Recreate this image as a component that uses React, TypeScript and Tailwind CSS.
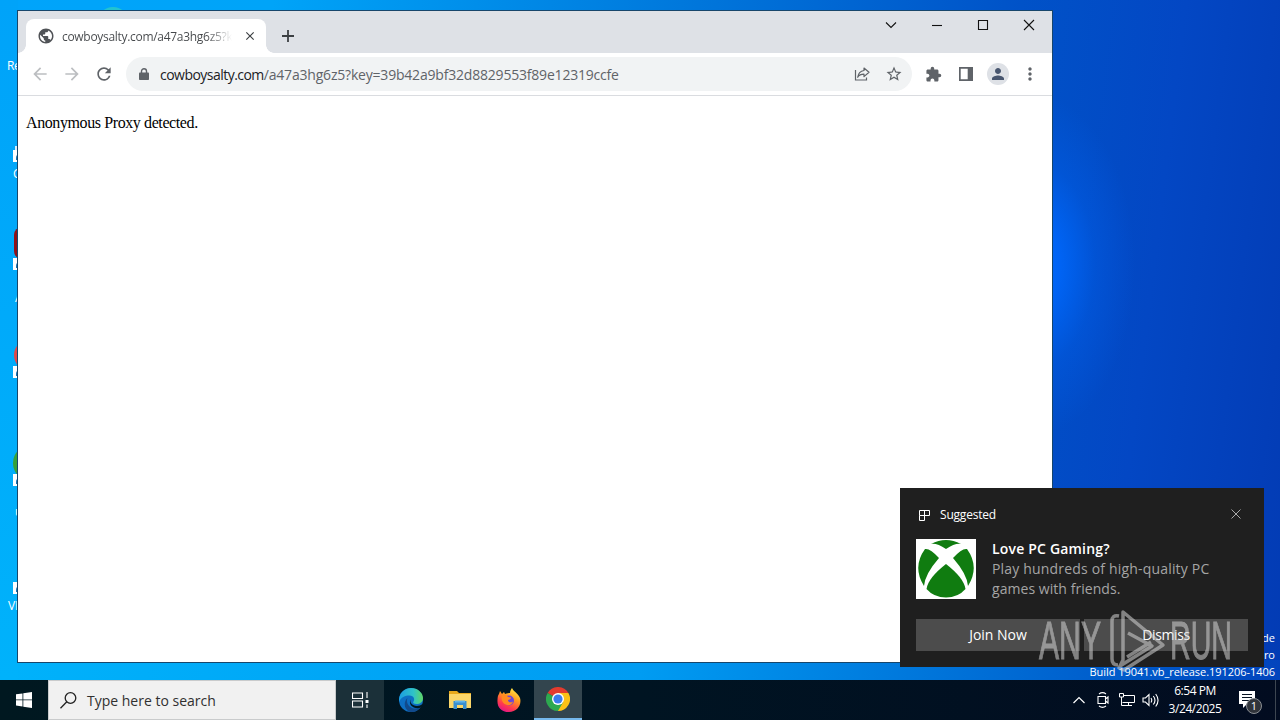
import type { ReactNode } from "react";
import { MdArrowBack, MdArrowForward, MdClose, MdExtension, MdMoreVert, MdPerson, MdPublic, MdRefresh, MdStarBorder } from "react-icons/md";

const shortcuts = [
  { id: "bin", top: "top-[150px]", art: null },
  { id: "pdf", top: "top-[258px]", art: "absolute top-[227px] left-[14px] h-8 w-8 rounded-lg bg-[#8f1118]" },
  { id: "red", top: "top-[366px]", art: "absolute top-[339px] left-[14px] h-8 w-8 rounded-full bg-[#e04848]" },
  { id: "green", top: "top-[474px]", art: "absolute top-[445px] left-[13px] h-9 w-9 rounded-full bg-[#35a13a]" },
  { id: "vlc", top: "top-[582px]", art: null },
];

const DesktopIcons = () => (
  <div className="absolute inset-0 text-xs text-white">
    <div className="absolute top-[7px] left-[97px] h-8 w-8 rounded-full bg-[#22c3d0]" />
    <div className="absolute top-[146px] left-[15px] h-2 w-3 bg-[#d9eefb]" />
    {shortcuts.map(({ id, top, art }) => (
      <div key={id}>
        {art && <div className={art} />}
        <div className={`absolute left-[13px] h-3 w-3 bg-white ${top}`}>
          <div className="absolute top-1 left-[3px] h-1.5 w-2 rounded-tl bg-[#1474b8]" />
        </div>
      </div>
    ))}
    <span className="absolute top-[58px] left-[7px] tracking-[-0.3px]">Re</span>
    <span className="absolute top-[166px] left-[13px]">C</span>
    <span className="absolute top-[290px] left-[15px]">A</span>
    <span className="absolute top-[504px] left-[15px]">u</span>
    <span className="absolute top-[598px] left-[8px] tracking-[-0.2px]">VL</span>
  </div>
);

const Caption = ({ children }: { children: ReactNode }) => (
  <div className="flex h-7 w-[46px] items-center justify-center">
    <svg width="12" height="12" viewBox="0 0 12 12" fill="none" stroke="#111" strokeWidth="1.1">
      {children}
    </svg>
  </div>
);

const TabStrip = () => (
  <div className="flex h-[42px] bg-[#dee1e6]">
    <div className="relative mt-2 ml-2 flex h-[34px] w-60 items-center rounded-t-lg bg-white pl-[11px]">
      <div className="absolute bottom-0 -left-2 h-2 w-2 bg-[radial-gradient(circle_at_0_0,transparent_7.5px,white_8px)]" />
      <div className="absolute -right-2 bottom-0 h-2 w-2 bg-[radial-gradient(circle_at_100%_0,transparent_7.5px,white_8px)]" />
      <MdPublic className="size-[18px] text-[#505357]" />
      <span className="mt-px ml-[7px] w-[170px] overflow-hidden bg-gradient-to-r from-[#45484b] from-85% to-transparent bg-clip-text text-xs tracking-[-0.3px] whitespace-nowrap text-transparent">
        cowboysalty.com/a47a3hg6z5?k
      </span>
      <MdClose className="ml-[11px] size-3.5 text-[#3c4043]" />
    </div>
    <svg className="mt-[19px] ml-4" width="12" height="12" viewBox="0 0 12 12" stroke="#3c4043" strokeWidth="1.8">
      <path d="M6 0v12M0 6h12" />
    </svg>
    <div className="ml-auto flex">
      <Caption><path d="M1 3.5l5 5 5-5" /></Caption>
      <Caption><path d="M1 6.5h10" /></Caption>
      <Caption><path d="M1.5 1.5h9v9h-9z" /></Caption>
      <Caption><path d="M1 1l10 10M11 1L1 11" /></Caption>
    </div>
  </div>
);

const Toolbar = () => (
  <div className="flex h-[43px] items-center border-b border-[#dadce0] bg-white pl-3 text-[#5f6368]">
    <MdArrowBack className="size-5 text-[#bcbec1]" />
    <MdArrowForward className="ml-3 size-5 text-[#bcbec1]" />
    <MdRefresh className="ml-3 size-5" />
    <div className="ml-3 flex h-[34px] w-[786px] items-center rounded-full bg-[#f1f3f4] pl-[13px]">
      <svg width="10" height="13" viewBox="0 0 10 13" fill="none">
        <path d="M2.500 5V3.300a2.500 2.500 0 0 1 5 0V5" stroke="currentColor" strokeWidth="1.400" />
        <path d="M.8 4.500h8.400q.8 0 .8.800v6q0 .8-.8.800H.8q-.8 0-.8-.8v-6q0-.8.8-.8z" fill="currentColor" />
      </svg>
      <span className="mt-px ml-[11px] text-sm whitespace-nowrap">
        <span className="tracking-[-0.53px] text-[#202124]">cowboysalty.com</span>
        <span className="tracking-[-0.2px]">/a47a3hg6z5?key=39b42a9bf32d8829553f89e12319ccfe</span>
      </span>
      <svg className="mr-[15px] ml-auto" width="16" height="16" viewBox="0 0 16 16" fill="none" stroke="currentColor" strokeWidth="1.2">
        <path d="M1.500 4v10h11v-2.500" />
        <path d="M10 2l5 4.300-5 4.300V8.200C7 8.200 5 9 3.700 11.300 4.200 7.500 6.300 5 10 4.500z" strokeLinejoin="round" />
      </svg>
      <MdStarBorder className="mr-[9px] size-[18px]" />
    </div>
    <MdExtension className="ml-[13px] size-[17px]" />
    <svg className="ml-4" width="16" height="16" viewBox="0 0 16 16" fill="currentColor">
      <path d="M1 1h14v14H1zM2.700 2.700v10.600h7V2.700z" fillRule="evenodd" />
    </svg>
    <div className="ml-[13px] flex size-[22px] items-center justify-center rounded-full bg-[#dee1e6]">
      <MdPerson className="size-[18px] text-[#48566f]" />
    </div>
    <MdMoreVert className="ml-[11px] size-5" />
  </div>
);

const BrowserWindow = () => (
  <div className="absolute top-[10px] left-[17px] h-[653px] w-[1036px] border border-[#17466b] bg-white">
    <TabStrip />
    <Toolbar />
    <p className="mt-[18px] ml-2 font-['Liberation_Serif',serif] text-base leading-[18px] tracking-[-0.4px] text-black">
      Anonymous Proxy detected.
    </p>
  </div>
);

const XboxLogo = () => (
  <svg width="60" height="60" viewBox="0 0 60 60">
    <path d="M0 0h60v60H0z" fill="#fff" />
    <g fill="#107c10">
      <path d="M15 5Q30-3 45 5 39 4 30 10 21 4 15 5z" />
      <path d="M9 10Q14 9 23 19 9 35 8 47-4 28 9 10z" />
      <path d="M51 10Q46 9 37 19 51 35 52 47 64 28 51 10z" />
      <path d="M30 25Q48 39 49.500 50 42 58.500 30 58.500T10.500 50Q12 39 30 25z" />
    </g>
  </svg>
);

const Watermark = () => (
  <svg className="absolute top-[608px] left-[1036px]" width="200" height="66" viewBox="0 0 200 66" opacity="0.55">
    <g fill="#d4d4d4" stroke="#d4d4d4" strokeWidth="1" fontFamily="'Liberation Sans Narrow', 'Liberation Sans', sans-serif" fontSize="54">
      <text x="3" y="51" textLength="62" lengthAdjust="spacingAndGlyphs">ANY</text>
      <text x="134" y="51" textLength="62" lengthAdjust="spacingAndGlyphs">RUN</text>
    </g>
    <g fill="none" stroke="#d4d4d4" strokeWidth="3.500" strokeLinejoin="round">
      <path d="M83 8c-5-1-7 1-7 5v38c0 4 2 6 6 6" />
      <path d="M87 4l40 33-39 25-5-2 4-8z" />
      <path d="M92 25l24 13-32 20M91 49l24-15" />
    </g>
  </svg>
);

const Toast = () => (
  <div className="absolute top-[488px] left-[900px] flex h-[179px] w-[364px] flex-col bg-[#1f1f1f] px-4 pt-[19px] text-white">
    <div className="flex h-4 items-center text-xs">
      <svg className="ml-[3px]" width="12" height="12" viewBox="0 0 12 12" fill="none" stroke="white">
        <path d="M.5 1.500h10v5H.5zM.5 6.500v5h5v-10" />
      </svg>
      <span className="ml-[9px] tracking-[-0.2px]">Suggested</span>
      <svg className="mr-[7px] mb-0.5 ml-auto" width="10" height="10" viewBox="0 0 10 10" stroke="#aaa">
        <path d="M.5.5l9 9M9.500.5l-9 9" />
      </svg>
    </div>
    <div className="mt-4 flex gap-4">
      <XboxLogo />
      <div className="text-sm leading-5 whitespace-nowrap">
        <div className="font-semibold tracking-[0.18px]">Love PC Gaming?</div>
        <div className="tracking-[0.18px] text-[#a5a5a5]">Play hundreds of high-quality PC</div>
        <div className="tracking-[0.05px] text-[#a5a5a5]">games with friends.</div>
      </div>
    </div>
    <div className="mt-5 grid grid-cols-2 gap-1 text-sm">
      <div className="flex h-8 items-center justify-center bg-[#4c4c4c]">Join Now</div>
      <div className="flex h-8 items-center justify-center bg-[#4c4c4c] tracking-[-0.4px]">Dismiss</div>
    </div>
  </div>
);

const EdgeIcon = () => (
  <svg width="24" height="24" viewBox="0 0 24 24">
    <defs>
      <linearGradient id="edgeTop" x1="0" x2="1">
        <stop offset="0" stopColor="#1b9de2" />
        <stop offset="0.6" stopColor="#2fc2c8" />
        <stop offset="1" stopColor="#5fd665" />
      </linearGradient>
    </defs>
    <circle cx="12" cy="12" r="12" fill="#0d6fc4" />
    <path d="M0 11C1 4 6 0 12 0c7 0 12 5 12 10 0 4-3 6-6.500 6-3 0-4-1.500-3-2.500 1.500-2 .5-6-4-6C6 7.500 2 9 0 14z" fill="url(#edgeTop)" />
    <path d="M8.500 10c-2 5 2 10.500 8 10.500 2 0 4-.5 5.500-1.500C19 23 15 24.500 11 24 5 22 4 14 8.500 10z" fill="#114a8c" />
    <path d="M12 10.500c-2 3.500 1 7.500 6 7.500 2 0 4-1 5.500-2l.5 1-2 2.500c-6 2.500-14-2-10-9z" fill="#001820" />
  </svg>
);

const ExplorerIcon = () => (
  <svg width="22" height="18" viewBox="0 0 22 18">
    <path d="M0 0h8l2 2h12v4H0z" fill="#e8a91c" />
    <path d="M0 3h22v14H0z" fill="#fbd669" />
    <path d="M4.500 10h13v8h-3.500v-4H8v4H4.500z" fill="#3a8fd0" />
    <path d="M6 9.500h10v2H6z" fill="#62b4ea" />
  </svg>
);

const FirefoxIcon = () => (
  <svg width="24" height="24" viewBox="0 0 24 24">
    <defs>
      <linearGradient id="fox" x1="0.8" y1="0" x2="0.3" y2="1">
        <stop offset="0" stopColor="#fff04a" />
        <stop offset="0.4" stopColor="#ff9a20" />
        <stop offset="0.75" stopColor="#ff3a4e" />
        <stop offset="1" stopColor="#e31587" />
      </linearGradient>
    </defs>
    <path d="M2 6l1-3 2 3 2-2 1 2c2-1 4-1 5-1 0-2 1-4 2-5 1 3 6 5 8 10 2 7-3 14-11 14S0 19 .5 12C.6 9 1 7 2 6z" fill="url(#fox)" />
    <circle cx="12" cy="12.500" r="5" fill="#6a45d8" />
    <path d="M5 7c2-1 5 0 6 2l3 .5c0 2-3 2-3 3s2 3 5 1c-1 5-9 5-11-1-.5-2-.5-4 0-5.500z" fill="#ff8a20" />
  </svg>
);

const ChromeIcon = () => (
  <svg width="24" height="24" viewBox="0 0 24 24">
    <path d="M12 12L1.600 6A12 12 0 0 1 22.400 6z" fill="#e33b2e" />
    <path d="M12 12L22.400 6A12 12 0 0 1 12 24z" fill="#fbc116" />
    <path d="M12 12l5.200 3L12 24A12 12 0 0 1 1.600 6z" fill="#2da94f" />
    <path d="M12 6h10.400l-5.200 9L12 12z" fill="#fbc116" />
    <circle cx="12" cy="12" r="6" fill="#fff" />
    <circle cx="12" cy="12" r="4.600" fill="#3b7ded" />
  </svg>
);

const Tray = () => (
  <div className="ml-auto flex h-full items-center text-white">
    <svg width="12" height="8" viewBox="0 0 12 8" fill="none" stroke="white" strokeWidth="1.2">
      <path d="M.5 7L6 1.500 11.500 7" />
    </svg>
    <svg className="ml-3" width="12" height="16" viewBox="0 0 12 16" fill="none" stroke="white" strokeWidth="1.1">
      <path d="M1 4.500h7.500v7H1zM8.500 7l2.500-2v6L8.500 9M2 2c2-1.500 5-1.500 7 0M2 14c2 1.500 5 1.500 7 0" />
    </svg>
    <svg className="ml-[9px]" width="18" height="14" viewBox="0 0 18 14" fill="none" stroke="white">
      <path d="M5.500 2.500h11v7h-12M10.500 9.500v3M7 12.500h7M1.500.5h4v3.500h-4zM3.500 4v8.500H7" />
    </svg>
    <svg className="ml-[6px]" width="18" height="14" viewBox="0 0 18 14" fill="none" stroke="white" strokeWidth="1.100">
      <path d="M1 5h2.500L7 1.500v11L3.500 9H1zM9 5c1 1.500 1 3 0 4.500M11.300 3c2 2.500 2 6 0 8.500M13.700 1c3 4 3 8.500 0 12.500" />
    </svg>
    <div className="ml-[7px] w-[56px] text-center text-xs leading-[18px] tracking-[-0.45px] whitespace-nowrap">
      <div>6:54 PM</div>
      <div>3/24/2025</div>
    </div>
    <div className="relative ml-4 h-10 w-[36px]">
      <svg className="absolute top-[11px] left-0" width="16" height="17" viewBox="0 0 16 17">
        <path d="M0 0h16v13H8l-4 4v-4H0z" fill="white" />
        <path d="M3 3.500h10M3 6.500h10M3 9.500h7" stroke="#071321" />
      </svg>
      <div className="absolute top-[18px] left-[7px] flex size-4 items-center justify-center rounded-full border border-[#8b8f94] bg-[#30343a] text-[11px]">1</div>
    </div>
    <div className="h-full w-[5px] border-l border-[#3d4651]" />
  </div>
);

const Taskbar = () => (
  <div className="flex h-10 items-center bg-gradient-to-r from-[#001820] via-[#001422] to-[#020c20]">
    <div className="flex w-12 justify-center">
      <svg width="16" height="16" viewBox="0 0 16 16" fill="white">
        <path d="M0 2.300l6.500-.9v6.100H0zM7.300 1.300L16 0v7.500H7.300zM0 8.300h6.500v6.200L0 13.600zM7.300 8.300H16V16l-8.700-1.300z" />
      </svg>
    </div>
    <div className="flex h-10 w-72 items-center border border-[#c9cbcc] bg-[#f1f1f1] pl-[11px] text-[#303030]">
      <svg width="17" height="17" viewBox="0 0 17 17" fill="none" stroke="#222" strokeWidth="1.300">
        <circle cx="10.500" cy="6" r="5.300" />
        <path d="M6.800 9.800L.5 16.300" />
      </svg>
      <span className="mt-px ml-[10px] text-sm">Type here to search</span>
    </div>
    <div className="flex h-10 w-12 items-center justify-center bg-[#1b3039]">
      <svg width="17" height="16" viewBox="0 0 17 16" fill="none" stroke="white" strokeWidth="1.100">
        <path d="M.5 1h10v5.500H.5zM.5 9h10v6H.5zM15 0v6M15 12.500V16" />
        <path d="M13.500 8h3v3h-3z" fill="white" stroke="none" />
      </svg>
    </div>
    <div className="ml-[15px]"><EdgeIcon /></div>
    <div className="ml-[26px]"><ExplorerIcon /></div>
    <div className="ml-[26px]"><FirefoxIcon /></div>
    <div className="ml-[13px] flex h-10 w-12 items-center justify-center border-b-2 border-[#76b9ed] bg-[#33454e]">
      <ChromeIcon />
    </div>
    <Tray />
  </div>
);

export default function App() {
  return (
    <div className="flex h-[720px] w-[1280px] flex-col overflow-hidden font-['Open_Sans','Noto_Sans',sans-serif]">
      <div className="relative flex-1 bg-[radial-gradient(ellipse_100px_170px_at_1035px_265px,#0069ff_0%,#0069ffcc_25%,#0069ff44_60%,#0069ff00_100%),linear-gradient(97deg,#00a4fb_0%,#00a4f8_20%,#0078dc_50%,#0052c8_75%,#0347c4_87%,#033bb4_100%)]">
        <div className="absolute bottom-0 left-0 h-5 w-full bg-gradient-to-r from-[#00b2fb] via-[#009cf2] via-50% to-[#0344bd]" />
        <div className="absolute top-0 left-0 h-full w-[18px] bg-gradient-to-b from-[#00a3f9] to-[#00b2fb]" />
        <DesktopIcons />
        <BrowserWindow />
        <div className="absolute right-[5px] bottom-0 text-right text-[11px] leading-[17px] whitespace-nowrap text-white">
          <div>de</div>
          <div>ro</div>
          <div className="tracking-[-0.04px]">Build 19041.vb_release.191206-1406</div>
        </div>
        <Toast />
        <Watermark />
      </div>
      <Taskbar />
    </div>
  );
}
